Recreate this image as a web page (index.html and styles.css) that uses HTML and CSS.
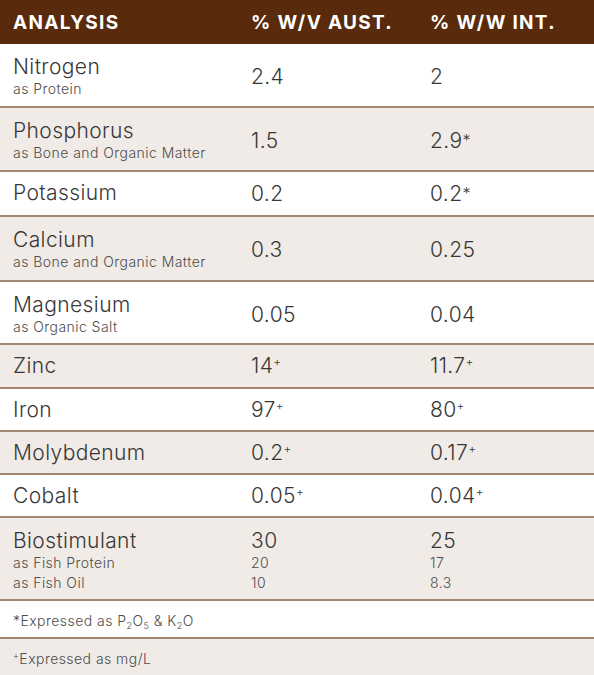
FILE: index.html
```html
<!DOCTYPE html>
<html>
<head>
<meta charset="utf-8">
<link rel="stylesheet" href="styles.css">
</head>
<body>
<div class="table">
  <div class="row head">
    <div class="cell">ANALYSIS</div>
    <div class="cell">% W/V AUST.</div>
    <div class="cell">% W/W INT.</div>
  </div>
  <div class="row">
    <div class="cell"><div class="t">Nitrogen</div><div class="s">as Protein</div></div>
    <div class="cell mid"><div class="t">2.4</div></div>
    <div class="cell mid"><div class="t">2</div></div>
  </div>
  <div class="row alt">
    <div class="cell"><div class="t">Phosphorus</div><div class="s">as Bone and Organic Matter</div></div>
    <div class="cell mid"><div class="t">1.5</div></div>
    <div class="cell mid"><div class="t">2.9<span class="ast">*</span></div></div>
  </div>
  <div class="row one tall">
    <div class="cell"><div class="t">Potassium</div></div>
    <div class="cell mid"><div class="t">0.2</div></div>
    <div class="cell mid"><div class="t">0.2<span class="ast">*</span></div></div>
  </div>
  <div class="row alt tall">
    <div class="cell"><div class="t">Calcium</div><div class="s">as Bone and Organic Matter</div></div>
    <div class="cell mid"><div class="t">0.3</div></div>
    <div class="cell mid"><div class="t">0.25</div></div>
  </div>
  <div class="row short">
    <div class="cell"><div class="t">Magnesium</div><div class="s">as Organic Salt</div></div>
    <div class="cell mid"><div class="t">0.05</div></div>
    <div class="cell mid"><div class="t">0.04</div></div>
  </div>
  <div class="row alt one tall">
    <div class="cell"><div class="t">Zinc</div></div>
    <div class="cell mid"><div class="t">14<sup class="plus">+</sup></div></div>
    <div class="cell mid"><div class="t">11.7<sup class="plus">+</sup></div></div>
  </div>
  <div class="row one">
    <div class="cell"><div class="t">Iron</div></div>
    <div class="cell mid"><div class="t">97<sup class="plus">+</sup></div></div>
    <div class="cell mid"><div class="t">80<sup class="plus">+</sup></div></div>
  </div>
  <div class="row alt one">
    <div class="cell"><div class="t">Molybdenum</div></div>
    <div class="cell mid"><div class="t">0.2<sup class="plus">+</sup></div></div>
    <div class="cell mid"><div class="t">0.17<sup class="plus">+</sup></div></div>
  </div>
  <div class="row one">
    <div class="cell"><div class="t">Cobalt</div></div>
    <div class="cell mid"><div class="t">0.05<sup class="plus">+</sup></div></div>
    <div class="cell mid"><div class="t">0.04<sup class="plus">+</sup></div></div>
  </div>
  <div class="row alt bio">
    <div class="cell"><div class="t">Biostimulant</div><div class="s">as Fish Protein</div><div class="s">as Fish Oil</div></div>
    <div class="cell"><div class="t">30</div><div class="s">20</div><div class="s">10</div></div>
    <div class="cell"><div class="t">25</div><div class="s">17</div><div class="s">8.3</div></div>
  </div>
  <div class="row note">
    <div class="cell full">*Expressed as P<sub>2</sub>O<sub>5</sub> &amp; K<sub>2</sub>O</div>
  </div>
  <div class="row note alt last">
    <div class="cell full"><sup class="plus">+</sup>Expressed as mg/L</div>
  </div>
</div>
</body>
</html>
```

FILE: styles.css
```css
html, body {
  margin: 0;
  padding: 0;
  background: #ffffff;
}

body {
  font-family: Inter, "Noto Sans", sans-serif;
  color: #383838;
}

.table {
  width: 594px;
}

.row {
  display: grid;
  grid-template-columns: 238px 179px 1fr;
  padding: 0 0 0 13px;
  border-bottom: 2px solid #a58670;
  background: #ffffff;
}

.row.alt {
  background: #f0ebe6;
}

.row.head {
  background: #592b0c;
  color: #ffffff;
  font-weight: 700;
  font-size: 19px;
  letter-spacing: 1.3px;
  height: 44px;
  align-items: center;
  border-bottom: 0;
}

.cell {
  padding: 10px 0 7px;
}

.row.tall .cell {
  padding-bottom: 8px;
}

.row.short .cell {
  padding-bottom: 6px;
}

.row.one .cell {
  padding: 9px 0 8px;
}

.row.one.tall .cell {
  padding: 9px 0 9px;
}

.row.bio .cell {
  padding: 10px 0 6px;
}

.head .cell {
  padding: 0;
}

.cell.mid {
  display: flex;
  flex-direction: column;
  justify-content: center;
}

.t {
  font-size: 21px;
  font-weight: 300;
  line-height: 25px;
  letter-spacing: 0.4px;
}

.row.one .t {
  line-height: 24px;
}

.s {
  font-size: 14px;
  font-weight: 300;
  line-height: 20px;
  letter-spacing: 0.45px;
  color: #4d4d4d;
}

.ast {
  font-size: 16px;
  vertical-align: 2px;
}

.plus {
  font-size: 12px;
  vertical-align: 7px;
  line-height: 0;
}

.note .cell {
  padding: 10px 0 6px;
  font-size: 14px;
  font-weight: 300;
  line-height: 20px;
  letter-spacing: 0.45px;
  color: #4d4d4d;
}

.note .cell.full {
  grid-column: 1 / -1;
}

.note sub {
  font-size: 9px;
  line-height: 0;
  vertical-align: -3px;
}

.note .plus {
  font-size: 9px;
  vertical-align: 5px;
}

.row.last {
  border-bottom: 0;
  min-height: 40px;
}
```
